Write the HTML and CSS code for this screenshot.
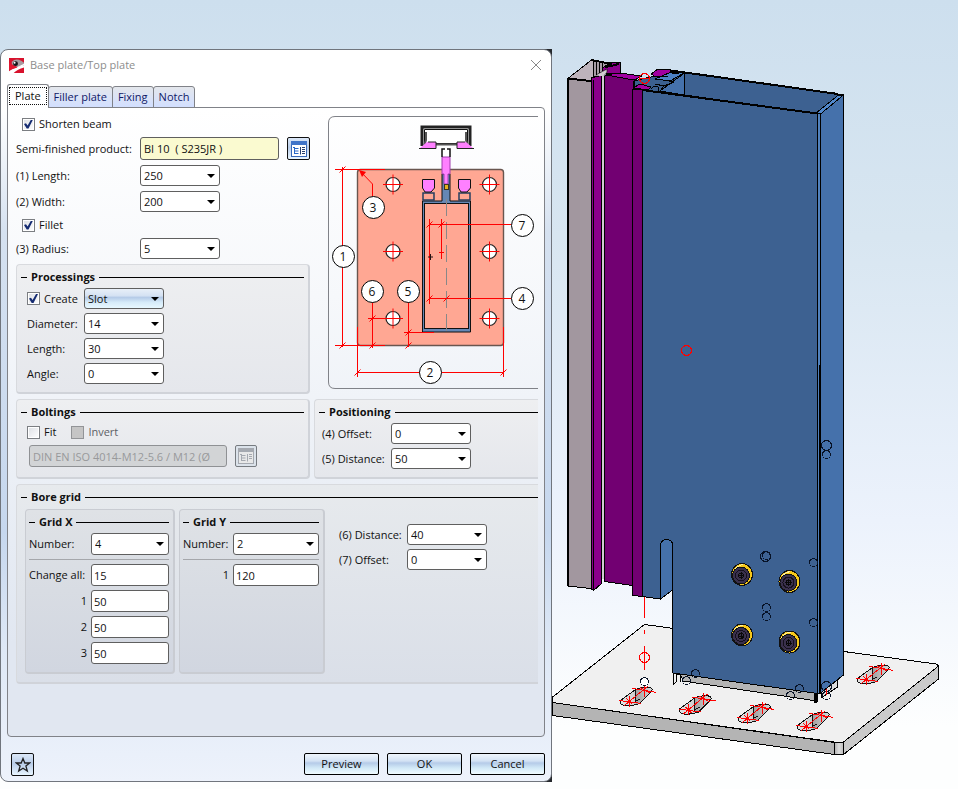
FILE: index.html
```html
<!DOCTYPE html>
<html lang="en">
<head>
<meta charset="utf-8">
<title>Base plate/Top plate</title>
<link rel="stylesheet" href="styles.css">
</head>
<body>
<main class="workspace">
  <div class="dialog-area">
  <form class="dialog" aria-label="Base plate/Top plate">
    <header class="titlebar">
      <svg class="app-icon" viewBox="0 0 16 16" aria-hidden="true">
        <rect width="16" height="16" fill="#d8112c"/>
        <path d="M3 4Q7 0 13 3L16 5V8L10 10 3 7Z" fill="#a89aa0"/>
        <path d="M0 14Q7 9 16 8V10Q9 12 5 16H0Z" fill="#fff"/>
        <path d="M0 5 9 10 0 13Z" fill="#e2162f"/>
        <path d="M8 10 16 8V6Z" fill="#fff"/>
        <circle cx="7" cy="6" r="2.600" fill="#161218"/>
        <circle cx="6" cy="5" r="1" fill="#fff"/>
      </svg>
      <h1 class="title">Base plate/Top plate</h1>
      <button class="close" type="button" aria-label="Close">
        <svg viewBox="0 0 12 12"><path d="M1 1 11 11M11 1 1 11" stroke="#888" fill="none"/></svg>
      </button>
    </header>

    <nav class="tabs" role="tablist">
      <button type="button" class="tab tab-active" role="tab" aria-selected="true"><span>Plate</span></button>
      <button type="button" class="tab" role="tab">Filler plate</button>
      <button type="button" class="tab" role="tab">Fixing</button>
      <button type="button" class="tab" role="tab">Notch</button>
    </nav>

    <section class="panel">
      <div class="split">
        <div class="column">
          <div class="base-form">
            <div class="check-row"><input type="checkbox" id="shorten" checked><label for="shorten">Shorten beam</label></div>
            <div class="field product">
              <label for="product">Semi-finished product:</label>
              <input class="text yellow" id="product" value="BI 10  ( S235JR )">
              <button class="icon-button" type="button" aria-label="Choose product">
                <svg viewBox="0 0 16 16"><rect x=".5" y=".5" width="15" height="15" fill="#fff" stroke="#3768b8"/><rect width="16" height="4" fill="#3f74c8"/><path d="M2 6.500h2M3.500 6v7M3.500 7.500h4M3.500 10h4M3.500 12.500h4" stroke="#2868c8" fill="none"/><path d="M9.500 6v7.500M11 6.500h3M11 8.500h3M11 10.500h3M11 12.500h3" stroke="#27406e" fill="none"/></svg>
              </button>
            </div>
            <div class="field"><label for="length">(1) Length:</label><span class="combo"><select id="length"><option>250</option></select></span></div>
            <div class="field"><label for="width">(2) Width:</label><span class="combo"><select id="width"><option>200</option></select></span></div>
            <div class="check-row"><input type="checkbox" id="fillet" checked><label for="fillet">Fillet</label></div>
            <div class="field"><label for="radius">(3) Radius:</label><span class="combo"><select id="radius"><option>5</option></select></span></div>
          </div>

          <section class="group">
            <h2 class="group-title">Processings</h2>
            <div class="rows processing">
              <div class="field"><span class="check-label"><input type="checkbox" id="create" checked><label for="create">Create</label></span><span class="combo"><select class="shaded" aria-label="Processing type"><option>Slot</option></select></span></div>
              <div class="field"><label for="diameter">Diameter:</label><span class="combo"><select id="diameter"><option>14</option></select></span></div>
              <div class="field"><label for="slot-length">Length:</label><span class="combo"><select id="slot-length"><option>30</option></select></span></div>
              <div class="field"><label for="angle">Angle:</label><span class="combo"><select id="angle"><option>0</option></select></span></div>
            </div>
          </section>
        </div>

        <svg class="diagram" viewBox="328 116 210 273" role="img" aria-label="Base plate dimensions">
          <defs>
            <g id="hole"><circle r="7" fill="#fff" stroke="#222" stroke-width="1.200"/><path d="M-10 0H10M0-10V10" stroke="#f00"/></g>
            <path id="tick" d="M-3 3 3-3" stroke="#f00" fill="none"/>
          </defs>
          <path d="M538 116.500H335Q328.500 116.500 328.500 123V382Q328.500 388.500 335 388.500H538" fill="none" stroke="#808288"/>
          <rect x="357.500" y="169.500" width="146" height="176" rx="3" fill="#ffa793" stroke="#69564f" stroke-width="1.400"/>
          <g>
            <path d="M422.500 201V332H470.500V201H450V174H442V201Z" fill="#6587b5" stroke="#111"/>
            <rect x="424.500" y="203.500" width="44" height="125" fill="#ffa793" stroke="#111"/>
            <path d="M423 193H434V200H423ZM459 193H470V200H459Z" fill="#ffa793" stroke="#263f60" stroke-width="1.500"/>
            <path d="M422.500 179.500H434.500V188L431 192H425L422.500 188ZM458.500 179.500H470.500V188L467 192H461L458.500 188Z" fill="#ff80ff" stroke="#111"/>
            <path d="M442 149H450V157H442Z" fill="#fff"/>
            <path d="M442 157H450V174H448V184H444V174H442Z" fill="#ff80ff" stroke="#a03fae"/>
            <rect x="444.500" y="184.500" width="4" height="5" fill="#e4b020" stroke="#3d3320"/>
            <path d="M442 157V149H445M450 157V149H447" fill="none" stroke="#111" stroke-width="1.500"/>
            <path d="M422 146V127H470V146" fill="none" stroke="#222" stroke-width="3"/>
            <path d="M424.500 129.500H467.500V143.500H424.500Z" fill="#fff" stroke="#111"/>
            <path d="M426 132V140L424 146M466 132V140L468 146M434 144.500H458" stroke="#555" stroke-width="2" fill="none"/>
            <path d="M420 148 427 142H436V148ZM457 148V142H466L473 148Z" fill="#ff80ff"/>
            <path d="M419 148.500H436V142H428M474 148.500H457V142H465" stroke="#222" fill="none"/>
            <path d="M446.500 199V336" stroke="#888" stroke-dasharray="17 6" fill="none"/>
          </g>
          <use href="#hole" x="393" y="184.500"/><use href="#hole" x="489.500" y="184.500"/>
          <use href="#hole" x="393" y="251.500"/><use href="#hole" x="489.500" y="251.500"/>
          <use href="#hole" x="393" y="318.500"/><use href="#hole" x="489.500" y="318.500"/>
          <path d="M335 169.500H385M335 345.500H385M342.500 167V347M357.500 327V377M503.500 327V377M357.500 372.500H503.500M360 171 372.500 184V196M372.500 300V348M368 318.500H393M408.500 300V347M404 332.500H434M429.500 219V304M441.500 219V259M429.500 224.500H511M429.500 298.500H511M439 252.500H444" stroke="#f00" fill="none"/>
          <path d="M359 170 366 172 362 177Z" fill="#f00"/>
          <path d="M428 257H433M430.500 254V260" stroke="#211"/>
          <use href="#tick" x="342.500" y="169.500"/><use href="#tick" x="342.500" y="345.500"/><use href="#tick" x="357.500" y="372.500"/><use href="#tick" x="503.500" y="372.500"/><use href="#tick" x="372.500" y="318.500"/><use href="#tick" x="372.500" y="345.500"/><use href="#tick" x="408.500" y="332.500"/><use href="#tick" x="408.500" y="345.500"/><use href="#tick" x="429.500" y="224.500"/><use href="#tick" x="441.500" y="224.500"/><use href="#tick" x="429.500" y="298.500"/><use href="#tick" x="446.500" y="298.500"/>
          <g fill="#fff" stroke="#000">
            <circle cx="343.500" cy="256.500" r="11"/><circle cx="430.500" cy="372.500" r="11"/><circle cx="373.500" cy="207.500" r="11"/><circle cx="522.500" cy="298.500" r="11"/><circle cx="408.500" cy="291.500" r="11"/><circle cx="372.500" cy="291.500" r="11"/><circle cx="522.500" cy="225.500" r="11"/>
          </g>
          <g class="callouts">
            <text x="343" y="261">1</text><text x="430" y="377">2</text><text x="373" y="212">3</text><text x="522" y="303">4</text><text x="408" y="296">5</text><text x="372" y="296">6</text><text x="522" y="230">7</text>
          </g>
        </svg>
      </div>

      <div class="split">
        <section class="group">
          <h2 class="group-title">Boltings</h2>
          <div class="bolting-checks">
            <input type="checkbox" id="fit"><label for="fit">Fit</label>
            <input type="checkbox" id="invert" disabled><label for="invert" class="dim">Invert</label>
          </div>
          <div class="bolting-type">
            <input class="text" aria-label="Bolt type" value="DIN EN ISO 4014-M12-5.6 / M12 (Ø" disabled>
            <button class="icon-button" type="button" aria-label="Choose bolt" disabled>
              <svg viewBox="0 0 16 16"><rect x=".5" y=".5" width="15" height="15" fill="#e8e8e8" stroke="#a5a9b0"/><rect width="16" height="4" fill="#a5a9b0"/><path d="M2 6.500h2M3.500 6v7M3.500 7.500h4M3.500 10h4M3.500 12.500h4M9.500 6v7.500M11 6.500h3M11 8.500h3M11 10.500h3" stroke="#a5a9b0" fill="none"/></svg>
            </button>
          </div>
        </section>
        <section class="group open">
          <h2 class="group-title">Positioning</h2>
          <div class="rows positioning">
            <div class="field"><label for="offset4">(4) Offset:</label><span class="combo"><select id="offset4"><option>0</option></select></span></div>
            <div class="field"><label for="distance5">(5) Distance:</label><span class="combo"><select id="distance5"><option>50</option></select></span></div>
          </div>
        </section>
      </div>

      <section class="group open bore">
        <h2 class="group-title">Bore grid</h2>
        <div class="bore-body">
          <section class="group inner">
            <h3 class="group-title">Grid X</h3>
            <div class="grid-fields grid-x">
              <label for="nx">Number:</label><span class="combo"><select id="nx"><option>4</option></select></span>
              <hr>
              <label for="all">Change all:</label><input class="text" id="all" value="15">
              <label class="num" for="x1">1</label><input class="text" id="x1" value="50">
              <label class="num" for="x2">2</label><input class="text" id="x2" value="50">
              <label class="num" for="x3">3</label><input class="text" id="x3" value="50">
            </div>
          </section>
          <section class="group inner">
            <h3 class="group-title">Grid Y</h3>
            <div class="grid-fields grid-y">
              <label for="ny">Number:</label><span class="combo"><select id="ny"><option>2</option></select></span>
              <hr>
              <label class="num" for="y1">1</label><input class="text" id="y1" value="120">
            </div>
          </section>
          <div class="rows bore-side">
            <div class="field"><label for="distance6">(6) Distance:</label><span class="combo"><select id="distance6"><option>40</option></select></span></div>
            <div class="field"><label for="offset7">(7) Offset:</label><span class="combo"><select id="offset7"><option>0</option></select></span></div>
          </div>
        </div>
      </section>
    </section>

    <footer class="footer">
      <button class="icon-button star" type="button" aria-label="Favourites">
        <svg viewBox="0 0 16 16"><path d="M8 1.500 9.800 6H14.700L10.900 9 12.300 14 8 11.200 3.700 14 5.100 9 1.300 6H6.200Z" fill="none" stroke="#222" stroke-width="1.300"/></svg>
      </button>
      <button class="button" type="button">Preview</button>
      <button class="button" type="button">OK</button>
      <button class="button" type="button">Cancel</button>
    </footer>
  </form>
  </div>

  <svg class="scene" viewBox="552 0 406 789" role="img" aria-label="3D view of post on base plate">
    <defs>
      <linearGradient id="bore" x1="0" x2="1"><stop offset="0" stop-color="#e4e4e4"/><stop offset=".48" stop-color="#cdcdcd"/><stop offset=".5" stop-color="#a2a2a2"/><stop offset="1" stop-color="#d8d8d8"/></linearGradient>
      <linearGradient id="corner" x1="0" x2="1"><stop offset="0" stop-color="#b0b0b0"/><stop offset=".5" stop-color="#ddd"/><stop offset="1" stop-color="#bbb"/></linearGradient>
      <g id="slot">
        <path d="M-9-1 6-12Q12-15 20-14 24-13 22-10L10 2Q2 5-5 4-10 3-9-1Z" fill="url(#bore)" stroke="#111"/>
        <path d="M6-12V0L11-3" fill="none" stroke="#111"/>
        <path d="M-10-1 12 2M0-6V5M-5 4 19-16M3-13 27-9M15-17V-5M-3-3 3 3M11-14 21-8" fill="none" stroke="#f00"/>
      </g>
      <g id="bolt">
        <ellipse rx="10.500" ry="11" fill="#f6c71b" stroke="#111"/>
        <path d="M-8-4Q-5-9 1-10" stroke="#fff0a0" fill="none"/>
        <ellipse cx="-1" cy="1" rx="8.500" ry="8.500" fill="#3a304c" stroke="#111"/>
        <ellipse cx="-1" cy="1" rx="5.500" ry="5.500" fill="none" stroke="#15101c"/>
        <circle cx="-1" cy="1" r="2.500" fill="none" stroke="#080808"/>
        <path d="M-4 1H2M-1-3V4" stroke="#080808"/>
      </g>
    </defs>
    <g stroke="#000" stroke-linejoin="round">
      <path d="M552 697.500 644.500 624.500 936 664Q940 666 938 667.500L845 742H834L552 702.500Z" fill="#f0f0f0"/>
      <path d="M552.500 702.500 834.500 742.500V754.500L552.500 715.500Z" fill="#b4b4b4"/>
      <path d="M843.500 742 938.500 666V679L843.500 754.500Z" fill="#cacaca"/>
      <path d="M834.500 742.500H843.500V754.500H834.500Z" fill="url(#corner)"/>
    </g>
    <use href="#slot" x="629.500" y="701.500"/><use href="#slot" x="688.500" y="710"/><use href="#slot" x="747.500" y="718.500"/><use href="#slot" x="806.500" y="726.500"/><use href="#slot" x="866.500" y="679.500"/>
    <g stroke="#000">
      <path d="M821 692 837.500 680V687L821 698Z" fill="#ddd"/>
      <path d="M680 673 817 692V701L683 681Z" fill="#b4b4b4"/>
      <path d="M673.500 672V684L676 682V674L680 675V682" fill="#eee"/>
      <path d="M815 692V703" stroke-width="3"/>
    </g>
    <g stroke="#000" stroke-linejoin="round">
      <path d="M568.500 78 591.500 60 594 61V82L569 80Z" fill="#bdb3bb"/>
      <path d="M593.500 61 612 63 604 75 593.500 77Z" fill="#a79da5"/>
      <path d="M596.500 62V75M599.500 62V73M602 63V71"/>
      <path d="M602 68 612 62.500H620.500V73L604 74Z" fill="#8b008b"/>
      <path d="M605 67 616 65 619 63" fill="none" stroke-width="2"/>
      <path d="M567.500 78.500 591 81V588.500L567.500 586Z" fill="#a2979f"/>
      <path d="M568 78V586" stroke-width="2"/>
      <path d="M591 78 601.500 75.500V583.500L593.500 590.500 591 588.500Z" fill="#8b008b"/>
      <path d="M593.500 80V590"/>
      <path d="M605 76 617 73 640 76 634 81 632.500 585.500 604.500 581.500Z" fill="#720072"/>
      <path d="M606 75 619 73 642 76 634 80Z" fill="#a000a0"/>
      <path d="M596 75 607 69V72L604 76V579H602V76Z" fill="#d0ccd0" stroke="none"/>
      <path d="M596 75 607 69V72L604 76"  fill="none" stroke-width=".6"/>
      <path d="M634 81 655 76 684 73V95L642 90 634 86Z" fill="#3b608f"/>
      <path d="M651 74 658 69 671 70 668 76 656 77Z" fill="#a000a0"/>
      <path d="M671 72 684 73 670 81 655 79Z" fill="#4c81c5"/>
      <path d="M684.500 73V95L660 91Z" fill="#4571ab"/>
      <path d="M684.500 72.500 843.500 95 820 114 684.500 95Z" fill="#3d6191"/>
      <path d="M815.500 113.500 838.500 95H843.500L820.500 114.500Z" fill="#5188cc"/>
      <path d="M632.500 89 642.500 90V596.500L632.500 595.500Z" fill="#720072"/>
      <path d="M633 88 640 84 651 87 648 90Z" fill="#a000a0"/>
      <path d="M651 89 654 86 658 87V91M660 91 664 86M664 80 674 82 664 86 655 84M656 76 668 77M672 74 679 73" fill="none"/>
      <path d="M660.500 599V545Q661 539.500 667 539.500 672.500 540 672.500 545V590Z" fill="#4571ab"/>
      <path d="M820.500 114 843.500 95V675L820.500 693Z" fill="#4571ab"/>
      <path d="M642.500 90 817.500 113.500V693.500L672.500 673V543Q671 539.500 666.500 539.500 660.500 540 660.500 546V599L642.500 596.500Z" fill="#3d6191"/>
      <path d="M817.500 113.500H820.500V693H817.500Z" fill="#5081bd"/>
      <path d="M820 365V693" stroke-width="2"/>
      <path d="M568 78.500 591 81M642 90 817 113.500M671 70.500 838 94M591 60 612 64" fill="none" stroke-width="2"/>
    </g>
    <use href="#bolt" x="742" y="574.500"/><use href="#bolt" x="742" y="635"/><use href="#bolt" x="789.500" y="581.500"/><use href="#bolt" x="789.500" y="642"/>
    <g fill="none" stroke="#071226">
      <circle cx="765.500" cy="556.500" r="5"/><circle cx="766.500" cy="555.500" r="4"/><circle cx="813.500" cy="562.500" r="4"/><circle cx="766.500" cy="607.500" r="4"/><circle cx="766.500" cy="616.500" r="4"/><circle cx="813.500" cy="622.500" r="4"/><circle cx="799.500" cy="688.500" r="4"/><circle cx="790.500" cy="695.500" r="4"/><circle cx="826.500" cy="686.500" r="5"/><circle cx="826.500" cy="695.500" r="4"/><circle cx="644.500" cy="681.500" r="4" fill="#fff"/><circle cx="695.500" cy="673.500" r="4"/><circle cx="686.500" cy="680.500" r="4"/><circle cx="826.500" cy="445.500" r="5"/><circle cx="826.500" cy="454.500" r="4"/>
    </g>
    <g fill="none" stroke="#f00">
      <path d="M644.500 597V618M644.500 630V634M644.500 646V670M826.500 689V695M640 78.500H650"/>
      <circle cx="644.500" cy="657.500" r="5"/><circle cx="686.500" cy="350.500" r="5"/><circle cx="644.500" cy="78.500" r="5"/>
    </g>
  </svg>
</main>
</body>
</html>
```
FILE: styles.css
```css
* { box-sizing: border-box; }

body {
  margin: 0;
  min-height: 100vh;
  background: linear-gradient(#cddfee, #d8e6f1 30%, #ecf2fc 66%, #fdfefe 92%);
  color: #111;
  font: 11px/16px "Open Sans", "Noto Sans", sans-serif;
}

button, input, select { font: inherit; color: inherit; margin: 0; }
h1, h2, h3 { margin: 0; font-size: 11px; }

.workspace {
  display: grid;
  grid-template-columns: 552fr 406fr;
  align-items: start;
}

.scene { display: block; width: 100%; shape-rendering: crispEdges; }

.dialog-area {
  margin-top: 49px;
  background: linear-gradient(to right, transparent 47%, #25282d 47%);
}

.dialog {
  padding: 0 6px;
  border: 1px solid #70757d;
  border-radius: 8px;
  background: linear-gradient(#fff, #fff 8%, #d5e1f0 25%, #c6d7ee 66%, #dee8f6 82%, #edf2fb);
}

.titlebar { display: flex; align-items: center; gap: 6px; height: 30px; padding: 0 3px 0 2px; }
.app-icon { width: 15px; height: 15px; }
.title { flex: 1; font-weight: 400; color: #8d8d8d; }
.close { width: 12px; height: 12px; padding: 0; border: 0; background: none; }
.close svg { display: block; }

.tabs { display: flex; align-items: flex-end; height: 28px; margin-bottom: -1px; position: relative; }
.tab {
  height: 22px;
  margin-left: -1px;
  padding: 0 5px;
  border: 1px solid #808288;
  border-radius: 3px 3px 0 0;
  background: linear-gradient(#e4e7ec, #d2dfff);
  color: #101866;
}
.tab-active { height: 24px; margin-left: 0; padding: 1px; border-bottom: 0; background: #fff; color: #111; }
.tab-active span { display: block; margin-bottom: 2px; padding: 0 5px; border: 1px dotted #111; }

.panel {
  display: flex;
  flex-direction: column;
  gap: 5px;
  padding: 8px 6px 52px 8px;
  border: 1px solid #808288;
  border-radius: 0 4px 4px 4px;
  background: linear-gradient(#fff, #f6f8fb 30%, #e1e7f1 85%);
}

.split { display: grid; grid-template-columns: 294fr 224fr; gap: 4px; }
.diagram { display: block; width: calc(100% - 14px); margin-left: 14px; }
.callouts { text-anchor: middle; fill: #111; font-size: 12px; }

.field { display: flex; align-items: center; }
.field label { flex: none; white-space: nowrap; }
.base-form { display: flex; flex-direction: column; gap: 5px; margin-bottom: 5px; }
.base-form .field > label { width: 124px; }
.check-row { display: flex; align-items: center; gap: 4px; height: 16px; padding-left: 6px; }
.product .text { width: 139px; margin-right: 8px; white-space: pre; }

.combo { position: relative; display: block; width: 80px; }
.combo::after {
  content: "";
  position: absolute;
  right: 5px;
  top: 9px;
  width: 8px;
  height: 4px;
  background: #000;
  clip-path: polygon(0 0, 100% 0, 50% 100%);
  pointer-events: none;
}
select, .text {
  display: block;
  width: 100%;
  height: 21px;
  padding: 0 3px;
  border: 1px solid #5f5f5f;
  border-radius: 3px;
  background: #fff;
  appearance: none;
}
.shaded { background: linear-gradient(#e8eff8, #d5e2f3 35%, #b5cbe8 45%, #d6ebf9 70%, #e8f8ff); }
.text { height: 22px; padding: 0 2px; }
.yellow { height: 23px; padding: 0 3px; background: #fafad0; }
.text:disabled { border-color: #8f9194; background: #d2d4d6; color: #98999b; }

input[type="checkbox"] {
  flex: none;
  width: 13px;
  height: 13px;
  border: 1px solid #7b7e82;
  background: linear-gradient(135deg, #dcdfe4, #fff);
  box-shadow: inset 0 0 0 1px #fff;
  appearance: none;
}
input[type="checkbox"]:checked::before {
  content: "";
  display: block;
  width: 9px;
  height: 9px;
  margin: 1px;
  background: #162c72;
  clip-path: polygon(0 50%, 22% 42%, 40% 68%, 78% 0, 100% 0, 50% 100%, 30% 100%);
}
input[type="checkbox"]:disabled { background: #c5c5c5; border-color: #929497; box-shadow: none; }
.dim { color: #5d6066; }

.icon-button {
  display: grid;
  place-items: center;
  flex: none;
  width: 23px;
  height: 23px;
  padding: 0;
  border: 1px solid #111;
  border-radius: 2px;
  background: linear-gradient(#dce8f8, #b9cde8 45%, #e8f5ff);
}
.icon-button svg { width: 16px; height: 16px; }
.icon-button:disabled { width: 22px; height: 22px; border-color: #777b80; background: #dbe2ea; }

.group {
  padding: 4px 4px 8px;
  border: 1px solid #d8dade;
  border-right: 2px solid #d0d3d9;
  border-bottom: 2px solid #d0d3d9;
  border-radius: 4px;
  background: linear-gradient(#eeeff1, #e5e7ec);
}
.open { border-right: 0; border-radius: 4px 0 0 4px; padding-right: 0; }
.group-title { display: flex; align-items: center; gap: 4px; font-weight: 700; }
.group-title::before, .group-title::after { content: ""; width: 6px; height: 1px; background: #000; }
.group-title::after { flex: 1; }

.rows { display: flex; flex-direction: column; gap: 4px; padding: 3px 0 0 6px; }
.processing .field > :first-child { width: 57px; }
.check-label { display: flex; align-items: center; gap: 4px; }
.positioning { padding-left: 3px; }
.positioning .field > label { width: 69px; }

.bolting-checks { display: flex; align-items: center; gap: 4px; padding: 0 6px; height: 24px; }
.bolting-checks #invert { margin-left: 11px; }
.bolting-type { display: flex; gap: 8px; padding: 1px 47px 0 8px; }
.bolting-type .text { flex: 1; min-width: 0; padding: 0 3px; }

.bore { background: linear-gradient(#e7eaed, #dadfe8); }
.bore-body { display: grid; grid-template-columns: 150px 146px 1fr; gap: 4px; padding: 4px 0 0 4px; }
.inner {
  padding: 4px 4px 8px 3px;
  border-color: #c9ccd2;
  background: linear-gradient(#dfe2e6, #d1d6e0);
}
.grid-fields { display: grid; gap: 4px; align-content: start; align-items: center; padding-top: 3px; }
.grid-x { grid-template-columns: 58px 1fr; }
.grid-y { grid-template-columns: 46px 1fr; }
.grid-fields label { white-space: nowrap; }
.grid-fields .num { text-align: right; }
.grid-fields .combo { width: 100%; }
.grid-fields select { height: 22px; }
.grid-fields hr { grid-column: 1 / -1; width: 100%; height: 1px; margin: 0; border: 0; background: #a5a7ab; }
.bore-side { padding: 15px 0 0 10px; }
.bore-side .field > label { width: 68px; }

.footer { display: flex; gap: 8px; padding: 16px 0 5px 4px; }
.star { margin-right: auto; }
.button {
  width: 75px;
  height: 22px;
  padding: 0;
  border: 1px solid #000;
  border-radius: 2px;
  background: linear-gradient(#eff5fc, #d3e2f4 35%, #b5cbe8 45%, #d2e9f7 70%, #f0fbff);
}
```
